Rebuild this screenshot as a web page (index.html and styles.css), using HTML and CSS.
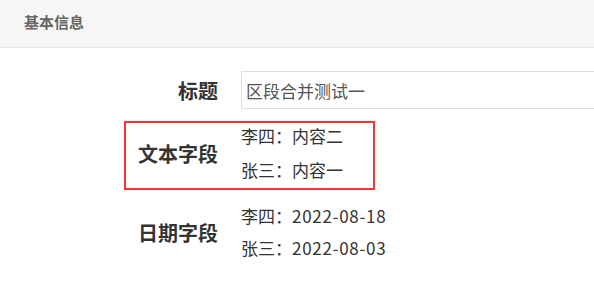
FILE: index.html
```html
<!DOCTYPE html>
<html lang="zh-CN">
<head>
    <meta charset="UTF-8">
    <meta name="viewport" content="width=device-width, initial-scale=1.0">
    <title>基本信息</title>
    <link rel="stylesheet" href="styles.css">
</head>
<body>
    <div class="panel-header">基本信息</div>
    <div class="form">
        <div class="field">
            <label class="field-label" for="title">标题</label>
            <input type="text" id="title" class="field-input" value="区段合并测试一">
        </div>
        <div class="field field-marked">
            <div class="field-label">文本字段</div>
            <div class="field-values">
                <div class="value-line">李四：内容二</div>
                <div class="value-line">张三：内容一</div>
            </div>
        </div>
        <div class="field field-dates">
            <div class="field-label">日期字段</div>
            <div class="field-values">
                <div class="value-line">李四：<span class="value-date">2022-08-18</span></div>
                <div class="value-line">张三：<span class="value-date">2022-08-03</span></div>
            </div>
        </div>
    </div>
</body>
</html>
```

FILE: styles.css
```css
body {
    margin: 0;
    overflow: hidden;
    background-color: #fff;
    font-family: "Noto Sans CJK SC", "Noto Sans", sans-serif;
    color: #333;
}

.panel-header {
    height: 47px;
    line-height: 44px;
    padding-left: 24px;
    background-color: #f6f6f6;
    border-bottom: 1px solid #e6e6e6;
    font-size: 15px;
    font-weight: bold;
    color: #666;
}

.form {
    padding-top: 11px;
    padding-left: 126px;
}

.field {
    display: flex;
    align-items: center;
    margin-top: 12px;
}

.field-label {
    flex-shrink: 0;
    width: 92px;
    margin-right: 23px;
    text-align: right;
    font-size: 20px;
    font-weight: bold;
    color: #333;
}

.field-input {
    flex: 1;
    min-width: 0;
    box-sizing: border-box;
    height: 38px;
    padding: 0 4px;
    border: 1px solid #ddd;
    border-right: none;
    font-family: inherit;
    font-size: 17px;
    color: #555;
    outline: none;
}

.field-marked {
    box-sizing: border-box;
    width: 251px;
    margin-left: -2px;
    padding-bottom: 5px;
    border: 2px solid #f33;
}

.field-values {
    display: flex;
    flex-direction: column;
    gap: 8px;
}

.field-dates {
    margin-top: 13px;
}

.field-dates .field-values {
    gap: 6px;
}

.value-line {
    line-height: 26px;
    font-size: 17px;
    color: #333;
}

.value-date {
    letter-spacing: 0.7px;
}
```
